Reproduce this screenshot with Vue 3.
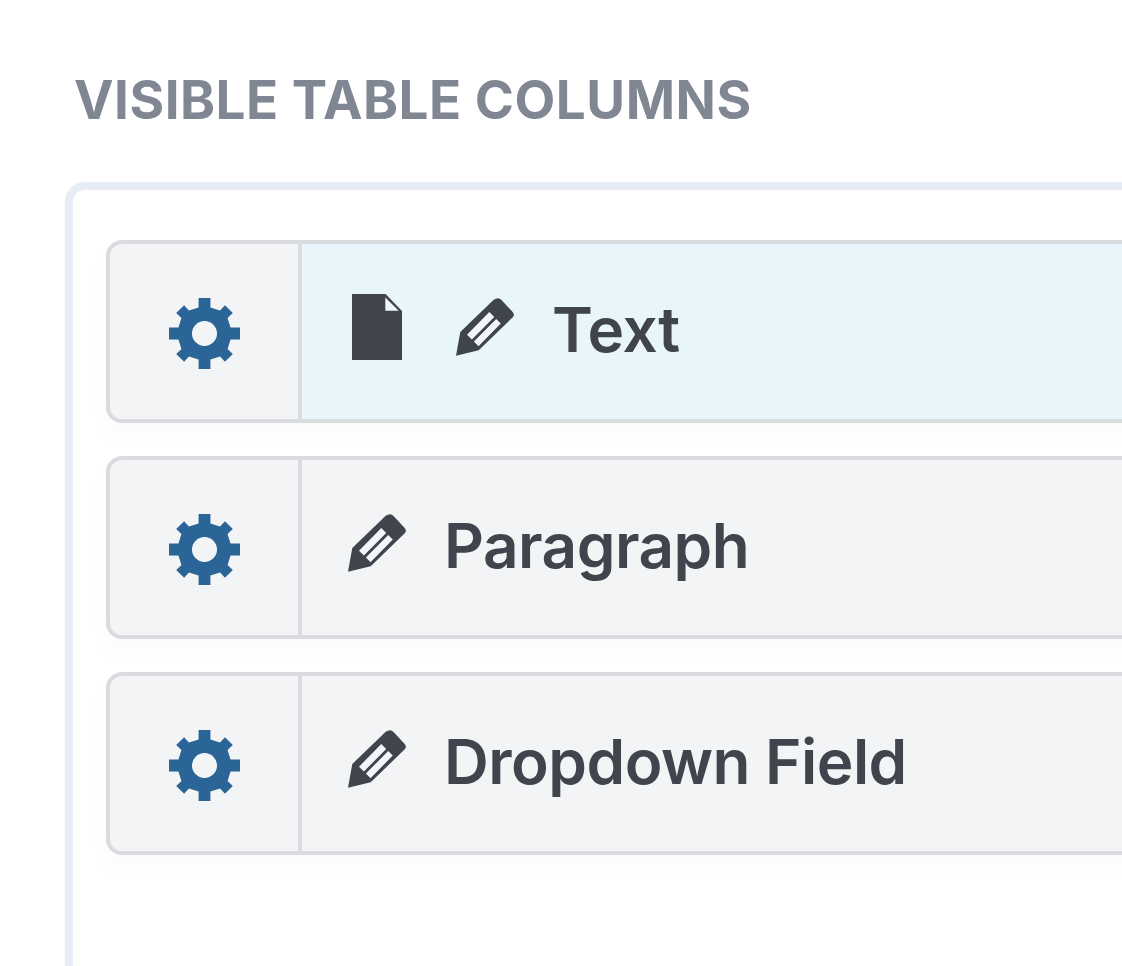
<script setup>
const fields = [
  { label: 'Text', active: true },
  { label: 'Paragraph', active: false },
  { label: 'Dropdown Field', active: false },
]
</script>

<template>
  <div class="page">
    <h2 class="title">VISIBLE TABLE COLUMNS</h2>
    <div class="card">
      <div v-for="field in fields" :key="field.label" class="row">
        <div class="handle">
          <svg class="gear" viewBox="0 0 72 72">
            <path fill-rule="evenodd" d="M30 0H42V9.6L51.8 12.6 56.7 7.3 64.7 15.3 59.4 20.2 62.4 30H72V42H62.4L59.4 51.8 64.7 56.7 56.7 64.7 51.8 59.4 42 62.4V72H30V62.4L20.2 59.4 15.3 64.7 7.3 56.7 12.6 51.8 9.6 42H0V30H9.6L12.6 20.2 7.3 15.3 15.3 7.3 20.2 12.6 30 9.6ZM36 23.3A12.7 12.7 0 1 0 36 48.7 12.7 12.7 0 1 0 36 23.3Z" />
          </svg>
        </div>
        <div class="content" :class="{ active: field.active }">
          <svg v-if="field.active" class="doc" viewBox="0 0 50 66">
            <path d="M0 0H33.5L50 17V66H0Z" />
            <path class="light" d="M33.3 3.4V16.7H46.7Z" />
          </svg>
          <svg class="pencil" viewBox="0 0 58 58">
            <path d="M0 57.7L4.3 34 37.7 1.7Q42.7-1.5 45.5 2L56 13.3Q59.5 16.5 56.5 19.5L22.7 52.3Z" />
            <path class="light" d="M11 36.7L33.3 14 38.2 18.9 15.9 41.6ZM17.9 43.6L40.2 20.9 44.8 25.5 22.5 48.2Z" />
          </svg>
          <span class="label">{{ field.label }}</span>
        </div>
      </div>
    </div>
  </div>
</template>

<style scoped>
.page { width: 1122px; height: 966px; overflow: hidden; background: #fff; font-family: Inter, "Liberation Sans", sans-serif; }
.title { margin: 0; padding: 71px 0 0 74px; height: 182px; box-sizing: border-box; font-size: 53px; line-height: 58px; font-weight: 700; letter-spacing: 0.5px; color: #808792; }
.card { width: 1300px; height: 900px; margin-left: 65px; padding: 50px 0 0 33px; box-sizing: border-box; background: #fff; border: 8px solid #e6edf5; border-radius: 20px; display: flex; flex-direction: column; gap: 33px; }
.row { display: flex; height: 183px; box-sizing: border-box; background: #f3f4f6; border: 4px solid #d9dbdf; border-radius: 16px; box-shadow: 0 12px 24px rgba(60, 70, 90, 0.025); overflow: hidden; }
.handle { width: 188px; flex-shrink: 0; display: flex; align-items: center; justify-content: center; border-right: 4px solid #d9dbdf; box-sizing: content-box; }
.gear { width: 71px; height: 71px; margin-top: 3.6px; fill: #2b6597; }
.content { flex: 1; display: flex; align-items: center; padding-left: 46px; color: #3f444d; }
.content.active { background: #e8f5fb; padding-left: 50px; }
.doc { width: 50px; height: 66px; margin-right: 54px; margin-bottom: 9px; fill: #3f444d; }
.pencil { width: 58px; height: 58px; margin-right: 38px; margin-bottom: 9px; fill: #3f444d; }
.light { fill: #f1f6fa; }
.label { font-size: 62px; font-weight: 600; line-height: 68px; letter-spacing: -0.5px; margin-bottom: 4px; }
</style>
